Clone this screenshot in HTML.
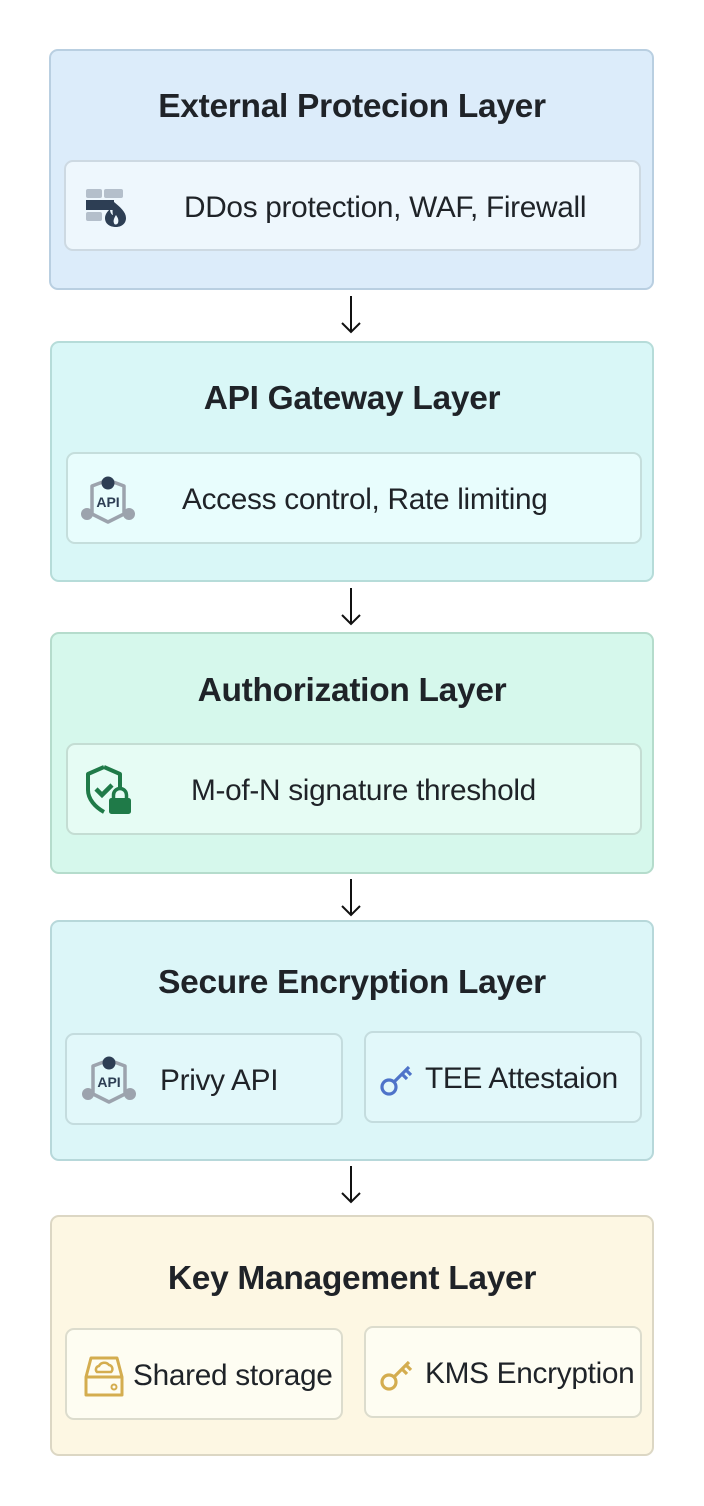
<!DOCTYPE html>
<html><head><meta charset="utf-8"><style>
*{margin:0;padding:0;box-sizing:border-box}
body{width:704px;height:1506px;background:#fff;position:relative;font-family:"Liberation Sans",sans-serif;color:#1f2328;overflow:hidden}
.L{position:absolute;border-radius:9px;border:2px solid}
.t{position:absolute;left:0;right:0;text-align:center;font-weight:bold;font-size:33.5px;color:#1f2328;letter-spacing:-0.3px}
.b{position:absolute;border-radius:9px;border:2px solid;font-size:29.8px;color:#1f2328}
.b span{position:absolute;top:4px;bottom:0;display:flex;align-items:center;white-space:nowrap;letter-spacing:-0.3px}
.b svg{position:absolute}
.arr{position:absolute;left:339px;width:24px}
</style></head><body>

<div class="L" style="left:49px;top:49px;width:605px;height:241px;background:#dcecfa;border-color:#b9cfe1"></div>
<div class="t" style="top:88px">External Protecion Layer</div>
<div class="b" style="left:64px;top:160px;width:577px;height:91px;background:#eef7fd;border-color:#cdd9e2">
<svg style="left:18px;top:23px" width="44" height="44" viewBox="0 0 44 44">
<rect x="2" y="4" width="16" height="9" rx="2" fill="#b4bfcb"/><rect x="20" y="4" width="19" height="9" rx="2" fill="#b4bfcb"/>
<rect x="2" y="15" width="28" height="10" fill="#2d3e54"/>
<rect x="2" y="27" width="16" height="9" rx="2" fill="#b4bfcb"/>
<path d="M30 17 C36 22 42 27 42 33 C42 39 37 42 32 42 C26 42 21 39 21 33 C21 29 24 26 26 24 C26 28 28 30 29 30 C28 26 29 21 30 17Z" fill="#2d3e54"/>
<path d="M32 30 C34 33 35 35 34 38 C33 40 30 40 30 38 C29 36 30 33 32 30Z" fill="#eef7fd"/>
</svg>
<span style="left:118px">DDos protection, WAF, Firewall</span></div>

<svg class="arr" style="top:294px" height="42" viewBox="0 0 24 42"><path d="M12 2 V38 M3 29 L12 38 L21 29" stroke="#111" stroke-width="2" fill="none"/></svg>

<div class="L" style="left:50px;top:341px;width:604px;height:241px;background:#d9f7f7;border-color:#b6dcd9"></div>
<div class="t" style="top:380px">API Gateway Layer</div>
<div class="b" style="left:66px;top:452px;width:576px;height:92px;background:#e8fdfd;border-color:#c5dedc">
<svg style="left:12px;top:18px" width="56" height="56" viewBox="0 0 56 56">
<path d="M12 14 L28 8 L44 14 V42 L28 50 L12 42Z" fill="none" stroke="#9ca3ad" stroke-width="3.5" stroke-linejoin="round"/>
<path d="M12 42 L7 44 M44 42 L49 44" stroke="#9ca3ad" stroke-width="3.5"/>
<circle cx="28" cy="11" r="6.5" fill="#2d3e54"/>
<circle cx="7" cy="42" r="6" fill="#9ca3ad"/><circle cx="49" cy="42" r="6" fill="#9ca3ad"/>
<text x="28" y="35" text-anchor="middle" font-family="Liberation Sans" font-weight="bold" font-size="14" fill="#2d3e54">API</text>
</svg>
<span style="left:114px">Access control, Rate limiting</span></div>

<svg class="arr" style="top:586px" height="42" viewBox="0 0 24 42"><path d="M12 2 V38 M3 29 L12 38 L21 29" stroke="#111" stroke-width="2" fill="none"/></svg>

<div class="L" style="left:50px;top:632px;width:604px;height:242px;background:#d6f8ec;border-color:#b5dccc"></div>
<div class="t" style="top:672px">Authorization Layer</div>
<div class="b" style="left:66px;top:743px;width:576px;height:92px;background:#e6fcf4;border-color:#c4ddd3">
<svg style="left:15px;top:19px" width="50" height="52" viewBox="0 0 50 52">
<path d="M21 3 L37 10 V25 M21 3 L5 10 V26 C5 35 12 43 21 48" fill="none" stroke="#1f7a48" stroke-width="4" stroke-linejoin="round"/>
<path d="M13 25 L19 31 L29 21" fill="none" stroke="#1f7a48" stroke-width="4.5"/>
<rect x="26" y="34" width="22" height="16" rx="2.5" fill="#1f7a48"/>
<path d="M30.5 35 V31 A6.5 6.5 0 0 1 43.5 31 V35" fill="none" stroke="#1f7a48" stroke-width="3.5"/>
</svg>
<span style="left:123px">M-of-N signature threshold</span></div>

<svg class="arr" style="top:877px" height="42" viewBox="0 0 24 42"><path d="M12 2 V38 M3 29 L12 38 L21 29" stroke="#111" stroke-width="2" fill="none"/></svg>

<div class="L" style="left:50px;top:920px;width:604px;height:241px;background:#dcf6f8;border-color:#b7d8da"></div>
<div class="t" style="top:964px">Secure Encryption Layer</div>
<div class="b" style="left:65px;top:1033px;width:278px;height:92px;background:#e2f8fa;border-color:#c4dcde">
<svg style="left:14px;top:17px" width="56" height="56" viewBox="0 0 56 56">
<path d="M12 14 L28 8 L44 14 V42 L28 50 L12 42Z" fill="none" stroke="#9ca3ad" stroke-width="3.5" stroke-linejoin="round"/>
<path d="M12 42 L7 44 M44 42 L49 44" stroke="#9ca3ad" stroke-width="3.5"/>
<circle cx="28" cy="11" r="6.5" fill="#2d3e54"/>
<circle cx="7" cy="42" r="6" fill="#9ca3ad"/><circle cx="49" cy="42" r="6" fill="#9ca3ad"/>
<text x="28" y="35" text-anchor="middle" font-family="Liberation Sans" font-weight="bold" font-size="14" fill="#2d3e54">API</text>
</svg>
<span style="left:93px">Privy API</span></div>
<div class="b" style="left:364px;top:1031px;width:278px;height:92px;background:#e2f8fa;border-color:#c4dcde">
<svg style="left:13px;top:29px" width="36" height="36" viewBox="0 0 36 36">
<circle cx="10" cy="25" r="7" fill="none" stroke="#4e73c9" stroke-width="3.2"/>
<path d="M15 20 L30 5 M23 12 L28 17 M27 8 L32 13" stroke="#4e73c9" stroke-width="3.2" fill="none"/>
</svg>
<span style="left:59px">TEE Attestaion</span></div>

<svg class="arr" style="top:1164px" height="42" viewBox="0 0 24 42"><path d="M12 2 V38 M3 29 L12 38 L21 29" stroke="#111" stroke-width="2" fill="none"/></svg>

<div class="L" style="left:50px;top:1215px;width:604px;height:241px;background:#fdf7e3;border-color:#dcd7c4"></div>
<div class="t" style="top:1260px">Key Management Layer</div>
<div class="b" style="left:65px;top:1328px;width:278px;height:92px;background:#fefdf2;border-color:#dcdccd">
<svg style="left:16px;top:25px" width="44" height="44" viewBox="0 0 44 44">
<path d="M3 22 L8 3 H34 L39 22 V40 H3Z M3 22 H39" fill="none" stroke="#d4ad4f" stroke-width="3" stroke-linejoin="round"/>
<path d="M14 17 H28 A4 4 0 0 0 26 10 A6 6 0 0 0 16 11 A3.5 3.5 0 0 0 14 17Z" fill="none" stroke="#d4ad4f" stroke-width="2.5"/>
<circle cx="31" cy="32" r="2.5" fill="none" stroke="#d4ad4f" stroke-width="2"/>
</svg>
<span style="left:66px">Shared storage</span></div>
<div class="b" style="left:364px;top:1326px;width:278px;height:92px;background:#fefdf2;border-color:#dcdccd">
<svg style="left:13px;top:29px" width="36" height="36" viewBox="0 0 36 36">
<circle cx="10" cy="25" r="7" fill="none" stroke="#d4ad4f" stroke-width="3.2"/>
<path d="M15 20 L30 5 M23 12 L28 17 M27 8 L32 13" stroke="#d4ad4f" stroke-width="3.2" fill="none"/>
</svg>
<span style="left:59px">KMS Encryption</span></div>

</body></html>
